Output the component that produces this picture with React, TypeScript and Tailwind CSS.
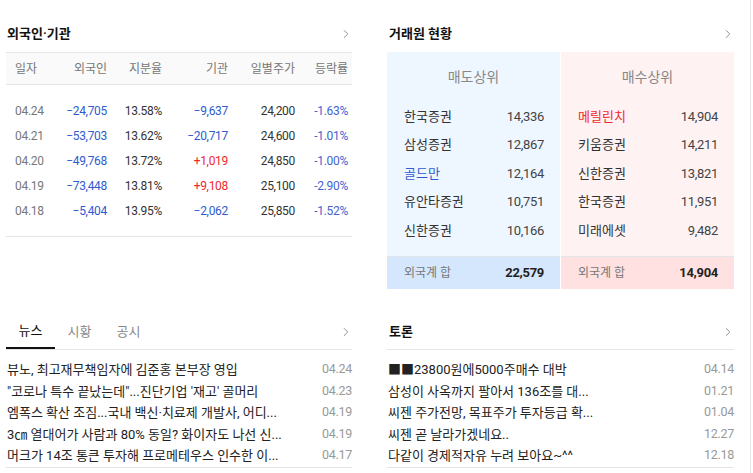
import { ChevronRight } from "lucide-react";

const font = { fontFamily: "Roboto, 'Noto Sans CJK KR', sans-serif" };

const investorRows = [
  { date: "04.24", foreign: "−24,705", share: "13.58%", inst: "−9,637", instUp: false, price: "24,200", rate: "-1.63%" },
  { date: "04.21", foreign: "−53,703", share: "13.62%", inst: "−20,717", instUp: false, price: "24,600", rate: "-1.01%" },
  { date: "04.20", foreign: "−49,768", share: "13.72%", inst: "+1,019", instUp: true, price: "24,850", rate: "-1.00%" },
  { date: "04.19", foreign: "−73,448", share: "13.81%", inst: "+9,108", instUp: true, price: "25,100", rate: "-2.90%" },
  { date: "04.18", foreign: "−5,404", share: "13.95%", inst: "−2,062", instUp: false, price: "25,850", rate: "-1.52%" },
];

const sellers = [
  { name: "한국증권", vol: "14,336", tone: "" },
  { name: "삼성증권", vol: "12,867", tone: "" },
  { name: "골드만", vol: "12,164", tone: "blue" },
  { name: "유안타증권", vol: "10,751", tone: "" },
  { name: "신한증권", vol: "10,166", tone: "" },
];

const buyers = [
  { name: "메릴린치", vol: "14,904", tone: "red" },
  { name: "키움증권", vol: "14,211", tone: "" },
  { name: "신한증권", vol: "13,821", tone: "" },
  { name: "한국증권", vol: "11,951", tone: "" },
  { name: "미래에셋", vol: "9,482", tone: "" },
];

const news = [
  { title: "뷰노, 최고재무책임자에 김준홍 본부장 영입", date: "04.24" },
  { title: "\"코로나 특수 끝났는데\"...진단기업 '재고' 골머리", date: "04.23" },
  { title: "엠폭스 확산 조짐...국내 백신·치료제 개발사, 어디...", date: "04.19" },
  { title: "3㎝ 열대어가 사람과 80% 동일? 화이자도 나선 신...", date: "04.19" },
  { title: "머크가 14조 통큰 투자해 프로메테우스 인수한 이...", date: "04.17" },
];

const talks = [
  { title: "■■23800원에5000주매수 대박", date: "04.14" },
  { title: "삼성이 사옥까지 팔아서 136조를 대...", date: "01.21" },
  { title: "씨젠 주가전망, 목표주가 투자등급 확...", date: "01.04" },
  { title: "씨젠 곧 날라가겠네요..", date: "12.27" },
  { title: "다같이 경제적자유 누려 보아요~^^", date: "12.18" },
];

const Arrow = () => <ChevronRight className="w-[14px] h-[14px] text-[#888]" strokeWidth={1.6} />;

const BrokerCol = ({ title, rows, bg, footBg, total }: { title: string; rows: typeof sellers; bg: string; footBg: string; total: string }) => (
  <div className={`flex-1 flex flex-col ${bg}`}>
    <div className="h-[50px] flex items-center justify-center text-[14px] text-[#888]">{title}</div>
    <div className="flex flex-col">
      {rows.map((r) => (
        <div key={r.name} className="h-[28.5px] flex items-center justify-between pl-[17px] pr-[16px] text-[13px]">
          <span className={r.tone === "blue" ? "text-[#2f5bd0]" : r.tone === "red" ? "text-[#f0282d]" : "text-[#333]"}>{r.name}</span>
          <span className="text-[#444] tracking-[-0.3px]">{r.vol}</span>
        </div>
      ))}
    </div>
    <div className={`mt-[11px] h-[33px] border-t border-[#e2e6eb] flex items-center justify-between pl-[17px] pr-[16px] ${footBg}`}>
      <span className="text-[12px] text-[#777]">외국계 합</span>
      <span className="text-[13px] font-bold text-[#222] tracking-[-0.3px]">{total}</span>
    </div>
  </div>
);

const ListRows = ({ rows }: { rows: typeof news }) => (
  <div className="pt-[9px] border-b border-[#e5e5e5]">
    {rows.map((r) => (
      <div key={r.title} className="h-[21.5px] flex items-center justify-between text-[13px]">
        <span className="text-[#222] truncate pl-[1px]">{r.title}</span>
        <span className="text-[#999] text-[12.5px] tracking-[-0.3px] shrink-0">{r.date}</span>
      </div>
    ))}
  </div>
);

export default function App() {
  return (
    <div className="w-[751px] h-[473px] bg-white border-r border-[#e5e5e5]" style={font}>
      <div className="flex pl-[6px] gap-[35px]">
        {/* 외국인·기관 */}
        <div className="w-[346px]">
          <div className="h-[52px] pt-[24px] flex justify-between items-start">
            <span className="pl-[1px] text-[13px] font-semibold text-[#111] leading-[20px]">외국인·기관</span>
            <span className="mt-[3px] -mr-[1px]"><Arrow /></span>
          </div>
          <div className="h-[33px] bg-[#fafafa] border-y border-[#e6e6e6] flex items-center text-[12px] text-[#777]">
            <span className="w-[48px] pl-[9px]">일자</span>
            <span className="w-[53px] text-right">외국인</span>
            <span className="w-[55px] text-right">지분율</span>
            <span className="w-[66px] text-right">기관</span>
            <span className="w-[67px] text-right">일별주가</span>
            <span className="w-[53px] text-right">등락률</span>
          </div>
          <div className="pt-[13px] pb-[13px] border-b border-[#e6e6e6]">
            {investorRows.map((r) => (
              <div key={r.date} className="h-[25px] flex items-center text-[12px] tracking-[-0.3px]">
                <span className="w-[48px] pl-[9px] text-[#777]">{r.date}</span>
                <span className="w-[53px] text-right text-[#2f5bd0]">{r.foreign}</span>
                <span className="w-[55px] text-right text-[#333]">{r.share}</span>
                <span className={`w-[66px] text-right ${r.instUp ? "text-[#f0282d]" : "text-[#2f5bd0]"}`}>{r.inst}</span>
                <span className="w-[67px] text-right text-[#333]">{r.price}</span>
                <span className="w-[53px] text-right text-[#4563d0]">{r.rate}</span>
              </div>
            ))}
          </div>
        </div>

        {/* 거래원 현황 */}
        <div className="w-[347px]">
          <div className="h-[52px] pt-[24px] flex justify-between items-start">
            <span className="pl-[2px] text-[13px] font-semibold text-[#111] leading-[20px]">거래원 현황</span>
            <span className="mt-[3px] -mr-[1px]"><Arrow /></span>
          </div>
          <div className="flex gap-[1px] h-[237px]">
            <BrokerCol title="매도상위" rows={sellers} bg="bg-[#eef6ff]" footBg="bg-[#d5e7fd]" total="22,579" />
            <BrokerCol title="매수상위" rows={buyers} bg="bg-[#fff2f2]" footBg="bg-[#ffe1e1]" total="14,904" />
          </div>
        </div>
      </div>

      <div className="flex pl-[6px] gap-[35px] mt-[25px]">
        {/* 뉴스 */}
        <div className="w-[346px]">
          <div className="h-[36px] flex items-center justify-between border-b border-[#e5e5e5] relative">
            <div className="flex h-full text-[13px]">
              <span className="w-[49px] h-full flex items-center justify-center text-[#111] border-b-2 border-[#111] -mb-[1px]">뉴스</span>
              <span className="w-[49px] flex items-center justify-center text-[#888]">시황</span>
              <span className="w-[49px] flex items-center justify-center text-[#888]">공시</span>
            </div>
            <span className="-mr-[1px]"><Arrow /></span>
          </div>
          <ListRows rows={news} />
        </div>

        {/* 토론 */}
        <div className="w-[347px]">
          <div className="h-[36px] flex items-center justify-between border-b border-[#e5e5e5]">
            <span className="pl-[2px] text-[13px] font-semibold text-[#111]">토론</span>
            <span className="-mr-[1px]"><Arrow /></span>
          </div>
          <ListRows rows={talks} />
        </div>
      </div>
    </div>
  );
}
